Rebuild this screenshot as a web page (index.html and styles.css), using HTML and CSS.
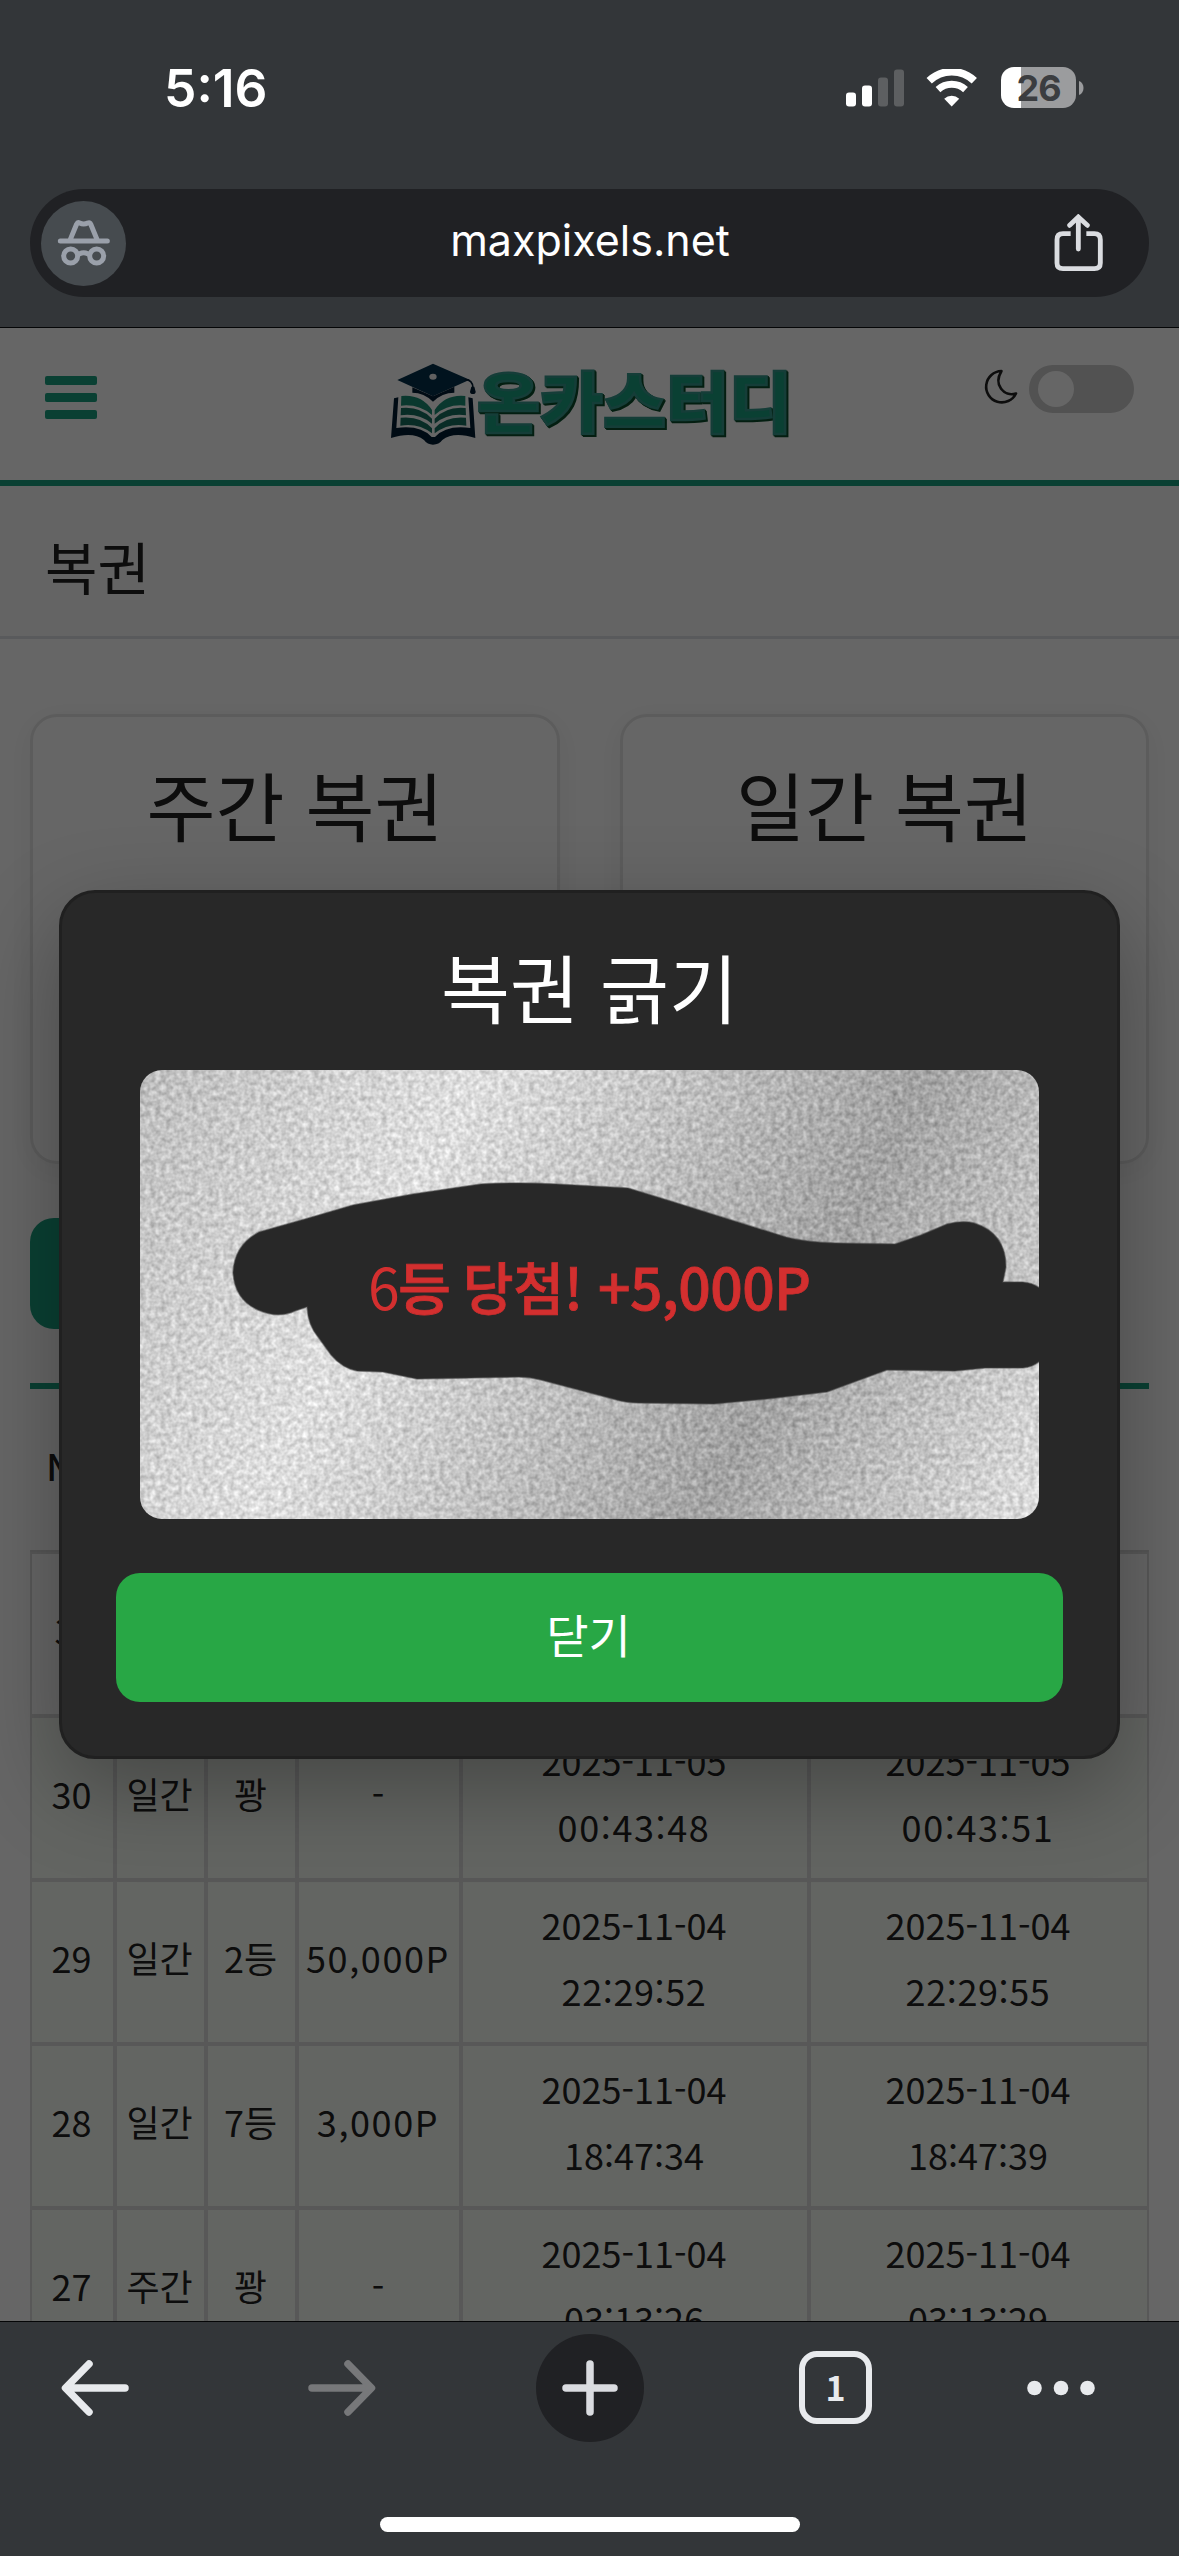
FILE: index.html
```
<!DOCTYPE html>
<html lang="ko">
<head>
<meta charset="utf-8">
<title>복권</title>
<link rel="stylesheet" href="styles.css">
</head>
<body>
<div class="screen">
  <header class="browser-top">
    <div class="status">
      <span class="time">5:16</span>
      <div class="status-icons">
        <svg class="signal" width="58" height="38" viewBox="0 0 58 38"><g fill="#fff"><rect y="23.500" width="10" height="14" rx="3"/><rect x="16" y="16.500" width="10" height="21" rx="3"/></g><g fill="#5d5f61"><rect x="32" y="8.500" width="10" height="29" rx="3"/><rect x="48" y=".5" width="10" height="37" rx="3"/></g></svg>
        <svg class="wifi" width="52" height="38" viewBox="0 0 52 38" fill="none" stroke="#fff"><path d="M3.200 11.800a32.500 32.500 0 0 1 45.100 0" stroke-width="7.600"/><path d="M12 20.600a20.300 20.300 0 0 1 27.500 0" stroke-width="7"/><path d="M25.700 37.500 18.200 29.800a11 11 0 0 1 15 0Z" fill="#fff" stroke="none"/></svg>
        <div class="battery"><span>26</span></div>
        <svg width="5" height="14" viewBox="0 0 5 14"><path d="M0 0C6 2 6 12 0 14Z" fill="#9b9c9e"/></svg>
      </div>
    </div>
    <div class="address">
      <span class="incognito">
        <svg width="54" height="48" viewBox="110 503 160 144" fill="none" stroke="#9aa0aa" stroke-width="15" stroke-linecap="round" stroke-linejoin="round"><path d="M119 569h141M149 564l19-46q3-6 9-3 12 6 24 0 7-3 9 3l19 46M177 607q12-6 24 0"/><circle cx="150" cy="614" r="21"/><circle cx="228" cy="614" r="21"/></svg>
      </span>
      <span class="url">maxpixels.net</span>
      <svg class="share" width="49" height="58" viewBox="703 494 147 174" fill="none" stroke="#dadce0" stroke-width="14.500" stroke-linecap="round"><path d="M776 599v-93M750 528l26-25 27 25"/><path stroke-linecap="butt" d="M753 553h-23q-18 0-18 18v70q0 17 18 17h94q18 0 18-17v-70q0-18-18-18h-24"/></svg>
    </div>
  </header>

  <main class="viewport">
    <div class="page">
      <div class="site-header">
        <div class="menu"><i></i><i></i><i></i></div>
        <div class="logo">
          <svg width="88" height="86" viewBox="60 64 264 258">
            <g fill="#04304b"><path d="M82 118 189 69l110 48-110 50Z"/><path d="M127 140v16q35 0 62 27 27-27 64-27v-18l-64 29Z" fill="#021c33"/></g>
            <ellipse cx="189" cy="108" rx="11" ry="9" fill="#f2f2f2"/>
            <path d="M284 117q24-1 25 25" fill="none" stroke="#021c33" stroke-width="5"/><path d="M304 138h9l4 15q0 7-8 7-9 0-9-7Z" fill="#021c33"/>
            <g fill="#1a8d73"><path d="M94 166q60-6 92 42v15q-40-34-93-28ZM286 166q-60-6-92 42v15q40-34 92-28Z"/><path d="M93 202q58-6 93 32v15q-41-33-94-25ZM287 202q-58-6-93 32v15q41-33 94-25Z" fill="#176f60"/><path d="M92 231q60-6 94 32v15q-41-32-95-23ZM288 231q-60-6-94 32v15q41-32 95-23Z" fill="#176f60"/></g>
            <path d="M72 173l13-3-6 92q72-10 106 27h10q34-37 106-27l-6-92 13 3 8 119q-66-20-99 6-10 14-28 14-17 0-27-14-33-26-99-6Z" fill="#021c33"/>
          </svg>
          <svg class="logo-text" width="314" height="72" viewBox="0 0 314 72"><text x="0" y="57.500" textLength="315" lengthAdjust="spacingAndGlyphs">온카스터디</text></svg>
        </div>
        <div class="theme">
          <svg width="34" height="36" viewBox="0 0 34 36" fill="none" stroke="#212121" stroke-width="2.600" stroke-linejoin="round"><path d="M17.500 2A15.700 15.700 0 1 0 32 24.500C20 28 9 16 17.500 2Z"/></svg>
          <span class="switch"></span>
        </div>
      </div>
      <h1 class="page-title">복권</h1>
      <div class="content">
        <div class="cards">
          <div class="card">주간 복권</div>
          <div class="card">일간 복권</div>
        </div>
        <div class="tab"></div>
        <table class="history">
          <colgroup><col class="c-no"><col class="c-sm"><col class="c-sm"><col class="c-prize"><col class="c-date"><col></colgroup>
          <thead><tr><th>No</th><th></th><th></th><th></th><th></th><th></th></tr></thead>
          <tbody>
            <tr class="latest"><td>31</td><td></td><td></td><td></td><td></td><td></td></tr>
            <tr><td>30</td><td>일간</td><td>꽝</td><td>-</td><td>2025-11-05<br><span class="wide">00:43:48</span></td><td>2025-11-05<br><span class="wide">00:43:51</span></td></tr>
            <tr><td>29</td><td>일간</td><td>2등</td><td><span class="wide">50,000P</span></td><td>2025-11-04<br><span class="clock">22:29:52</span></td><td>2025-11-04<br><span class="clock">22:29:55</span></td></tr>
            <tr><td>28</td><td>일간</td><td>7등</td><td><span class="wide">3,000P</span></td><td>2025-11-04<br>18:47:34</td><td>2025-11-04<br>18:47:39</td></tr>
            <tr><td>27</td><td>주간</td><td>꽝</td><td>-</td><td>2025-11-04<br>03:13:26</td><td>2025-11-04<br>03:13:29</td></tr>
          </tbody>
        </table>
      </div>
    </div>
    <div class="overlay">
      <div class="modal">
        <h2>복권 긁기</h2>
        <svg class="scratch" width="899" height="449" viewBox="0 0 899 449">
          <defs>
            <linearGradient id="silver" gradientUnits="userSpaceOnUse" x1="0" y1="0" x2="899" y2="449">
              <stop offset="0" stop-color="#bebebe"/><stop offset=".3" stop-color="#dedede"/><stop offset=".5" stop-color="#c0c0c0"/><stop offset=".7" stop-color="#a2a2a2"/><stop offset="1" stop-color="#dedede"/>
            </linearGradient>
            <filter id="grain" x="0" y="0" width="100%" height="100%" color-interpolation-filters="sRGB">
              <feTurbulence type="fractalNoise" baseFrequency=".19" numOctaves="2" seed="4"/>
              <feColorMatrix values="1 0 0 0 0 1 0 0 0 0 1 0 0 0 0 0 0 0 0 1" result="n"/>
              <feComposite in="SourceGraphic" in2="n" operator="arithmetic" k2="1" k3=".36" k4="-.18"/>
            </filter>
          </defs>
          <rect width="899" height="449" fill="url(#silver)" filter="url(#grain)"/>
          <path fill="#282828" stroke="#4a4a4a" stroke-opacity=".5" stroke-width="1.500" d="M93 203Q94 175 119 162L165 149 213 135 273 124 341 114Q380 112 416 114L488 118 537 133 646 167Q664 172 695 173L755 174 781 165 807 154Q823 150 834 153 866 163 866 197L863 212H883Q894 213 901 219V290Q894 297 883 298H845L815 301 747 300 687 322 627 329 574 334 499 333Q486 333 473 329L401 310Q390 307 379 307L277 309 243 302 217 301Q202 298 191 285L178 267Q168 255 167 237L155 241Q138 249 118 240 95 230 93 203Z"/>
          <g class="prize">
            <text class="rank" x="228" y="240">6</text>
            <text x="258" y="240" textLength="53" lengthAdjust="spacingAndGlyphs">등</text>
            <text x="323" y="240" textLength="120" lengthAdjust="spacingAndGlyphs">당첨!</text>
            <text x="458" y="240" textLength="213">+5,000P</text>
          </g>
        </svg>
        <button>닫기</button>
      </div>
    </div>
  </main>

  <footer class="browser-bottom">
    <nav class="tools">
      <svg width="68" height="56" viewBox="0 0 68 56" fill="none" stroke="#e8eaed" stroke-width="7.500" stroke-linecap="round" stroke-linejoin="round"><path d="M64 28H5M28 4 4.500 28 28 52"/></svg>
      <svg width="68" height="56" viewBox="0 0 68 56" fill="none" stroke="#77787a" stroke-width="7.500" stroke-linecap="round" stroke-linejoin="round"><path d="M4 28h59M40 4l23.500 24L40 52"/></svg>
      <span class="new-tab"><svg width="56" height="56" viewBox="0 0 56 56" stroke="#dadce0" stroke-width="7.500" stroke-linecap="round"><path d="M4 28h48M28 4v48"/></svg></span>
      <span class="tab-count">1</span>
      <svg width="68" height="16" viewBox="0 0 68 16" fill="#e8eaed"><circle cx="7.500" cy="8" r="7.300"/><circle cx="34" cy="8" r="7.300"/><circle cx="60.500" cy="8" r="7.300"/></svg>
    </nav>
    <div class="home-bar"></div>
  </footer>
</div>
</body>
</html>
```

FILE: styles.css
```
* { box-sizing: border-box; }
body { margin: 0; font-family: "Noto Sans CJK KR", sans-serif; color: #212121; }
svg { display: block; flex: none; }
.screen { width: 1179px; height: 2556px; display: flex; flex-direction: column; overflow: hidden; background: #333639; }

.browser-top { height: 328px; background: #333639; border-bottom: 1px solid #050607; font-family: Inter, sans-serif; color: #fff; }
.status { height: 189px; display: flex; justify-content: space-between; padding: 58px 95px 0 164px; }
.time { font-size: 51.500px; font-weight: 600; line-height: 60px; }
.status-icons { display: flex; align-items: center; height: 59px; }
.wifi { margin: 0 23px 0 22px; }
.battery { width: 75px; height: 41px; border-radius: 13px; margin-right: 3px; background: linear-gradient(90deg, #fff 20px, #9b9c9e 20px); color: #3b3d40; font-size: 36px; font-weight: 700; line-height: 42px; text-align: center; letter-spacing: -1px; }
.address { display: flex; align-items: center; justify-content: space-between; height: 108px; margin: 0 30px; padding: 0 46px 0 11px; border-radius: 54px; background: #202124; }
.incognito { width: 85px; height: 85px; display: grid; place-items: center; border-radius: 50%; background: #464b4f; }
.url { font-size: 43px; line-height: 54px; padding-bottom: 6px; }

.viewport { height: 1993px; position: relative; overflow: hidden; background: #fff; }
.site-header { height: 158px; border-bottom: 6px solid #19a080; display: flex; align-items: flex-start; padding: 0 45px; }
.menu { width: 52px; margin-top: 48px; display: grid; gap: 8px; }
.menu i { height: 9px; border-radius: 2px; background: #19a080; }
.logo { display: flex; margin: 34px 0 0 293px; }
.logo-text { margin: 7px 0 0 -1px; overflow: visible; }
.logo-text text { font-size: 66px; font-weight: 900; fill: #19a080; stroke: #36988c; stroke-width: 2.500px; filter: drop-shadow(1px 1px 0 #0a4d2c) drop-shadow(1px 1px 0 #0a4d2c); }
.theme { display: flex; margin: 37px 0 0 auto; }
.theme svg { margin: 4px 11px 0 0; }
.switch { width: 105px; height: 48px; border-radius: 24px; background: #ccc; padding: 6px 9px; }
.switch::before { content: ""; display: block; width: 36px; height: 36px; border-radius: 50%; background: #fff; }
.page-title { margin: 0; height: 153px; padding: 0 45px; border-bottom: 3px solid #dee2e6; background: #fafafa; font-size: 57px; font-weight: 400; line-height: 158px; }
.content { padding: 75px 30px 0; }
.cards { display: grid; grid-template-columns: 530px 529px; gap: 60px; }
.card { height: 450px; border: 3px solid #e6e6e6; border-radius: 27px; padding-top: 31px; text-align: center; font-size: 75px; line-height: 112px; box-shadow: 0 6px 30px rgba(0,0,0,.06); }
.tab { width: 300px; height: 111px; margin: 54px 0; border-radius: 24px; background: #19a080; }
.history { width: 1119px; table-layout: fixed; border-collapse: separate; border-spacing: 0; border-top: 6px solid #19a080; font-size: 36px; line-height: 66px; text-align: center; }
.c-no { width: 85px; } .c-sm { width: 91px; } .c-prize { width: 164px; } .c-date { width: 348px; }
.history th { height: 163px; padding: 0 4px 10px 0; font-weight: 500; border-bottom: 2px solid #d6d6d6; }
.history td { height: 164px; padding: 0 2px 10px 0; white-space: nowrap; border: 2px solid #dcdcdc; background: #f8fcf5; }
.history .latest td { background: #fff; padding-left: 6px; }
.wide { letter-spacing: 1.600px; }
.clock { letter-spacing: .6px; }

.overlay { position: absolute; inset: 0; background: rgba(0,0,0,.6); padding: 562px 59px 0; }
.modal { height: 869px; border: 3px solid #202020; border-radius: 36px; background: #282828; padding: 0 54px; display: flex; flex-direction: column; align-items: center; box-shadow: 0 30px 90px rgba(0,0,0,.3); }
.modal h2 { margin: 37px 0 28px; font-size: 75px; font-weight: 400; line-height: 112px; color: #fff; }
.scratch { border-radius: 22px; }
.prize { font-size: 57px; font-weight: 500; fill: #d32f2f; stroke: #d32f2f; stroke-width: .8px; }
.prize .rank { font-weight: 400; stroke: none; }
.modal button { width: 947px; height: 129px; margin-top: 54px; border: 0; border-radius: 24px; background: #28a745; color: #fff; font: 400 46px/120px "Noto Sans CJK KR", sans-serif; padding: 0 2px 9px 0; }

.browser-bottom { flex: 1; border-top: 1px solid #050607; background: #333639; }
.tools { height: 131px; display: grid; grid-template-columns: 247px 228px 263px 228px 1fr; align-items: center; padding-left: 61px; }
.new-tab { width: 108px; height: 108px; border-radius: 50%; background: #202124; display: grid; place-items: center; }
.tab-count { width: 73px; height: 73px; border: 6.500px solid #e8eaed; border-radius: 18px; color: #e8eaed; font: 600 34px/60px "Noto Sans CJK KR", sans-serif; text-align: center; }
.home-bar { width: 420px; height: 15px; border-radius: 8px; background: #fff; margin: 64px 0 0 380px; }
```
